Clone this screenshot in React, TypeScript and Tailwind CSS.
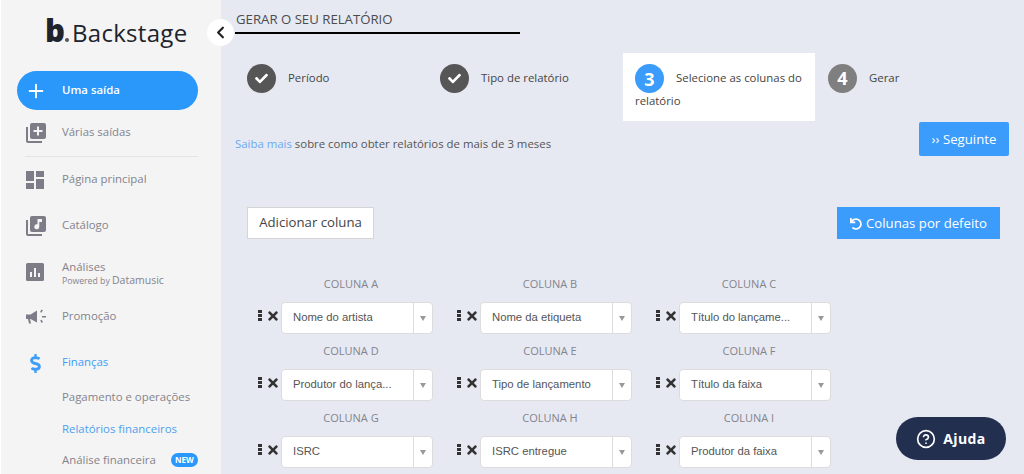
import { ChevronLeft, CircleHelp, Plus } from "lucide-react";
import { FaCheck, FaDollarSign, FaTimes, FaUndo } from "react-icons/fa";

const font = "font-['Open_Sans',sans-serif]";

const columns = [
  [
    { label: "COLUNA A", value: "Nome do artista" },
    { label: "COLUNA B", value: "Nome da etiqueta" },
    { label: "COLUNA C", value: "Título do lançame..." },
  ],
  [
    { label: "COLUNA D", value: "Produtor do lança..." },
    { label: "COLUNA E", value: "Tipo de lançamento" },
    { label: "COLUNA F", value: "Título da faixa" },
  ],
  [
    { label: "COLUNA G", value: "ISRC" },
    { label: "COLUNA H", value: "ISRC entregue" },
    { label: "COLUNA I", value: "Produtor da faixa" },
  ],
];

function StackPlusIcon() {
  return (
    <svg width="20" height="20" viewBox="0 0 20 20" fill="#7d7c87">
      <path d="M0 4h2v14h14v2H2a2 2 0 0 1-2-2z" />
      <path fillRule="evenodd" d="M6 0h12a2 2 0 0 1 2 2v12a2 2 0 0 1-2 2H6a2 2 0 0 1-2-2V2a2 2 0 0 1 2-2zm5 3.500v3.500H7.500v2H11v3.500h2V9h3.500V7H13V3.500z" />
    </svg>
  );
}

function StackMusicIcon() {
  return (
    <svg width="20" height="20" viewBox="0 0 20 20" fill="#7d7c87">
      <path d="M0 4h2v14h14v2H2a2 2 0 0 1-2-2z" />
      <path fillRule="evenodd" d="M6 0h12a2 2 0 0 1 2 2v12a2 2 0 0 1-2 2H6a2 2 0 0 1-2-2V2a2 2 0 0 1 2-2zm5.500 3v5.300a2.500 2.500 0 1 0 1.800 2.400V6H16V3z" />
    </svg>
  );
}

function DashboardIcon() {
  return (
    <svg width="18" height="18" viewBox="0 0 18 18" fill="#7d7c87">
      <path d="M0 0h8v10H0zM10 0h8v6h-8zM10 8h8v10h-8zM0 12h8v6H0z" />
    </svg>
  );
}

function ChartIcon() {
  return (
    <svg width="18" height="18" viewBox="0 0 18 18">
      <rect width="18" height="18" rx="1.500" fill="#7d7c87" />
      <path d="M4 9h2v5H4zM8 5h2v9H8zM12 10h2v4h-2z" fill="#f4f4f4" />
    </svg>
  );
}

function MegaphoneIcon() {
  return (
    <svg width="20" height="16" viewBox="0 0 20 16" fill="#7d7c87">
      <path d="M0 5.500h4.500L11 1.500v12L4.500 10H4l1 4.500H3L2 10H0z" />
      <path d="M15.500 0.500l1.400 0.800-1.500 2.400-1.300-0.800zM16 7h4v1.500h-4zM14.200 11.500l1.300-0.800 1.500 2.400-1.400 0.800z" />
    </svg>
  );
}

function NavItem({ icon, label, active }: { icon: React.ReactNode; label: string; active?: boolean }) {
  return (
    <div className="flex items-center h-[20px]">
      <div className="w-[61px] pl-[25px] flex justify-start shrink-0">{icon}</div>
      <div className={`pb-[2px] text-[11.4px] leading-[16px] ${active ? "text-[#3d9df8]" : "text-[#84838d]"}`}>
        {label}
      </div>
    </div>
  );
}

function Sidebar() {
  return (
    <aside className="w-[221px] h-full shrink-0 bg-[#f4f4f4] border-l border-white relative">
      <div className="h-[71px] pl-[44px] pt-[11px] flex items-baseline text-[#20222c] leading-[38px]">
        <span className="text-[31px] font-extrabold tracking-[-1px]">b</span>
        <span className="w-[4px] h-[4px] rounded-full bg-[#555] mr-[3px] ml-[1px]" />
        <span className="text-[24px] tracking-[0.3px]">Backstage</span>
      </div>

      <div className="ml-[16px] w-[181px] h-[39px] rounded-full bg-[#2a98fb] flex items-center text-white">
        <Plus size={22} strokeWidth={2} className="ml-[8px]" />
        <span className="ml-[15px] pb-[2px] text-[11.4px] font-semibold">Uma saída</span>
      </div>

      <div className="mt-[13px]">
        <NavItem icon={<StackPlusIcon />} label="Várias saídas" />
      </div>
      <div className="ml-[24px] w-[173px] h-px bg-[#e4e4e4] mt-[13px]" />
      <div className="mt-[13px]">
        <NavItem icon={<DashboardIcon />} label="Página principal" />
      </div>
      <div className="mt-[26px]">
        <NavItem icon={<StackMusicIcon />} label="Catálogo" />
      </div>

      <div className="mt-[24px] h-[28px] flex items-start">
        <div className="w-[61px] pl-[25px] pt-[3px] shrink-0">
          <ChartIcon />
        </div>
        <div className="-mt-px text-[#84838d]">
          <div className="text-[11.4px] leading-[16px]">Análises</div>
          <div className="text-[8.700px] leading-[11px]">
            Powered by <span className="text-[10.500px]">Datamusic</span>
          </div>
        </div>
      </div>

      <div className="mt-[19px]">
        <NavItem icon={<MegaphoneIcon />} label="Promoção" />
      </div>
      <div className="mt-[26px]">
        <NavItem icon={<FaDollarSign size={19} className="text-[#3d9df8]" />} label="Finanças" active />
      </div>

      <div className="pl-[61px] text-[11.4px] leading-[16px] text-[#84838d]">
        <div className="mt-[16px]">Pagamento e operações</div>
        <div className="mt-[16px] text-[#4d9ff0]">Relatórios financeiros</div>
        <div className="mt-[15px] flex items-center">
          <span>Análise financeira</span>
          <span className="ml-[15px] w-[27px] h-[14px] rounded-full bg-[#2a98fb] text-white text-[8px] font-bold leading-[14px] text-center">
            NEW
          </span>
        </div>
      </div>

      <button className="absolute top-[19px] -right-[13px] w-[27px] h-[27px] rounded-full bg-white flex items-center justify-center text-[#222]">
        <ChevronLeft size={19} strokeWidth={2.75} />
      </button>
    </aside>
  );
}

function StepCircle({ color, children }: { color: string; children: React.ReactNode }) {
  return (
    <span
      className={`inline-flex w-[29px] h-[29px] rounded-full items-center justify-center text-white text-[18px] font-bold shrink-0 ${color}`}
    >
      {children}
    </span>
  );
}

function Steps() {
  return (
    <div className="mt-[19px] h-[68px] flex text-[11.4px] text-[#444]">
      <div className="w-[193px] pl-[12px] pt-[11px] flex items-start">
        <StepCircle color="bg-[#565656]">
          <FaCheck size={13} />
        </StepCircle>
        <span className="ml-[12px] mt-[5px]">Período</span>
      </div>
      <div className="w-[195px] pl-[12px] pt-[11px] flex items-start">
        <StepCircle color="bg-[#565656]">
          <FaCheck size={13} />
        </StepCircle>
        <span className="ml-[12px] mt-[5px]">Tipo de relatório</span>
      </div>
      <div className="w-[192px] bg-white pl-[12px] pt-[11px] leading-[24px]">
        <div className="flex items-start">
          <StepCircle color="bg-[#3b9cfb]">3</StepCircle>
          <span className="ml-[12px] mt-[2px] whitespace-nowrap">Selecione as colunas do</span>
        </div>
        <div className="-mt-[4px]">relatório</div>
      </div>
      <div className="pl-[13px] pt-[11px] flex items-start">
        <StepCircle color="bg-[#7f7f7f]">4</StepCircle>
        <span className="ml-[12px] mt-[5px]">Gerar</span>
      </div>
    </div>
  );
}

function ColumnField({ label, value }: { label: string; value: string }) {
  return (
    <div className="w-[199px]">
      <div className="pl-[14px] text-center text-[11px] leading-[16px] text-[#84848c] w-[196px]">{label}</div>
      <div className="mt-[10px] flex items-start">
        <div className="ml-[12px] w-[4px] flex flex-col gap-[1px] mt-[8px]">
          <span className="w-[4px] h-[3px] bg-[#333]" />
          <span className="w-[4px] h-[3px] bg-[#333]" />
          <span className="w-[4px] h-[3px] bg-[#333]" />
        </div>
        <FaTimes size={14} className="text-[#333] mt-[7px] ml-[4px]" />
        <div className="ml-px w-[152px] h-[32px] rounded-[4px] border border-[#dcdcdc] bg-white flex items-center font-['Liberation_Sans',sans-serif]">
          <span className="flex-1 pl-[11px] pb-[2px] text-[11.3px] text-[#555] whitespace-nowrap">{value}</span>
          <span className="w-[19px] h-full border-l border-[#dcdcdc] flex items-center justify-center">
            <span className="w-0 h-0 border-x-[3px] border-x-transparent border-t-[5px] border-t-[#999]" />
          </span>
        </div>
      </div>
    </div>
  );
}

export default function App() {
  return (
    <div className={`w-[1024px] h-[474px] overflow-hidden flex bg-[#e6e9f2] ${font}`}>
      <Sidebar />

      <main className="flex-1 pl-[14px] relative">
        <div className="pl-px w-[285px] h-[34px] border-b-2 border-black pt-[9px] text-[13.2px] leading-[20px] text-[#4b4b4b]">
          GERAR O SEU RELATÓRIO
        </div>

        <Steps />

        <div className="flex justify-between items-start pr-[15px]">
          <p className="mt-[14px] text-[11.4px] leading-[18px] text-[#555]">
            <span className="text-[#6ba9f2]">Saiba mais</span> sobre como obter relatórios de mais de 3 meses
          </p>
          <button className="mt-[1px] w-[90px] h-[34px] pt-[2px] rounded-[2px] bg-[#3b9cfb] text-white text-[13.2px]">
            ›› Seguinte
          </button>
        </div>

        <div className="mt-[51px] flex justify-between items-center pl-[12px] pr-[24px]">
          <button className="h-[32px] w-[127px] bg-white border border-[#d5d5d5] text-[13.2px] text-[#444]">
            Adicionar coluna
          </button>
          <button className="h-[32px] w-[163px] pt-[2px] bg-[#3b9cfb] text-white text-[13.2px] flex items-center justify-center gap-[4px]">
            <FaUndo size={12} />
            Colunas por defeito
          </button>
        </div>

        <div className="mt-[37px] pl-[11px]">
          {columns.map((row) => (
            <div key={row[0].label} className="flex h-[67px]">
              {row.map((col) => (
                <ColumnField key={col.label} label={col.label} value={col.value} />
              ))}
            </div>
          ))}
        </div>

        <button className="absolute left-[675px] top-[417px] w-[110px] h-[43px] rounded-full bg-[#232f4f] text-white flex items-center justify-center gap-[7px] text-[14px] font-bold tracking-[0.4px]">
          <CircleHelp size={20} strokeWidth={2} />
          Ajuda
        </button>
      </main>
    </div>
  );
}
